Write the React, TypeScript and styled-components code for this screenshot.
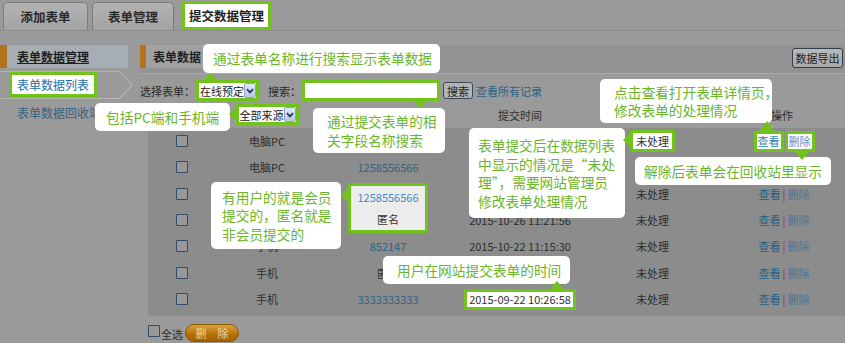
import React from 'react';
import styled, { createGlobalStyle, css } from 'styled-components';

const GREEN = '#72c21c';
const TIP_TEXT = '#6ab52c';
const ORANGE = '#b7731c';
const FONT = `"Noto Sans CJK SC", "Noto Sans", sans-serif`;
const COLS = '68px 102px 140px 124px 141px 1fr';

const GlobalStyle = createGlobalStyle`
  html, body { margin: 0; padding: 0; background: #9a9a9a; }
  body { font-family: ${FONT}; overflow: hidden; }
  * { box-sizing: border-box; }
`;

type Arrow = 'up' | 'down' | 'left' | 'right';
interface HlProps {
  $hl?: boolean;
  $arrow?: Arrow;
  $at?: number;
  $len?: number;
}

const arrowCss = (dir: Arrow, at: number, len: number) => {
  const s = 7;
  const base = css`
    content: '';
    position: absolute;
    width: 0;
    height: 0;
    border-style: solid;
    z-index: 4;
  `;
  switch (dir) {
    case 'up':
      return css`&::after { ${base}; left: ${at - s - 3}px; bottom: calc(100% + 3px);
        border-width: 0 ${s}px ${len}px ${s}px; border-color: transparent transparent ${GREEN} transparent; }`;
    case 'down':
      return css`&::after { ${base}; left: ${at - s - 3}px; top: calc(100% + 3px);
        border-width: ${len}px ${s}px 0 ${s}px; border-color: ${GREEN} transparent transparent transparent; }`;
    case 'left':
      return css`&::after { ${base}; top: ${at - s - 3}px; right: calc(100% + 3px);
        border-width: ${s}px ${len}px ${s}px 0; border-color: transparent ${GREEN} transparent transparent; }`;
    default:
      return css`&::after { ${base}; top: ${at - s - 3}px; left: calc(100% + 3px);
        border-width: ${s}px 0 ${s}px ${len}px; border-color: transparent transparent transparent ${GREEN}; }`;
  }
};

const highlight = css<HlProps>`
  ${(p) =>
    p.$hl &&
    css`
      border: 3px solid ${GREEN};
      background: #fff;
      position: relative;
      z-index: 3;
    `}
  ${(p) => p.$arrow && arrowCss(p.$arrow, p.$at ?? 0, p.$len ?? 7)}
`;

const Page = styled.div`
  position: relative;
  width: 845px;
  height: 343px;
  overflow: hidden;
  background: #9a9a9a;
  color: #2e2e2e;
  font-size: 11px;
`;

/* ---------- tabs ---------- */
const TabBar = styled.div`
  display: flex;
  align-items: flex-end;
  height: 31px;
  padding-left: 3px;
  border-bottom: 1px solid #8e8e8e;
`;

const Tab = styled.div<{ $active?: boolean; $w: number }>`
  width: ${(p) => p.$w}px;
  height: 28px;
  margin-right: 4px;
  border: 1px solid #7c7c7c;
  border-bottom: none;
  border-radius: 5px 5px 0 0;
  background: linear-gradient(#b3b3b3, #a3a3a3);
  display: flex;
  align-items: center;
  justify-content: center;
  font-size: 12.5px;
  font-weight: bold;
  color: #2a2a2a;
  ${(p) =>
    p.$active &&
    css`
      height: 29px;
      margin-left: 4px;
      border: 3px solid ${GREEN};
      border-radius: 0;
      background: #fff;
      color: #222;
    `}
`;

/* ---------- body ---------- */
const Body = styled.div`
  display: flex;
  gap: 6px;
  margin-top: 14px;
`;

const Sidebar = styled.div`
  width: 134px;
  flex-shrink: 0;
`;

const SideHeader = styled.div`
  width: 128px;
  height: 23px;
  border-left: 7px solid ${ORANGE};
  background: #a7aeb3;
  padding-left: 10px;
  line-height: 23px;
  font-size: 12px;
  font-weight: bold;
  text-decoration: underline;
  color: #1f1f1f;
`;

const SideItem = styled.div`
  position: relative;
  height: 28px;
  margin-top: 3px;
  padding-top: 1px;
  &::before {
    content: '';
    position: absolute;
    left: 0;
    right: 15px;
    top: 0;
    bottom: 0;
    border-top: 1px solid #b4b4b4;
    border-bottom: 1px solid #b4b4b4;
  }
  &::after {
    content: '';
    position: absolute;
    right: 5px;
    top: 4px;
    width: 19px;
    height: 19px;
    border-top: 1px solid #b4b4b4;
    border-right: 1px solid #b4b4b4;
    transform: rotate(45deg);
  }
`;

const ItemLabel = styled.span<HlProps>`
  display: inline-block;
  margin-left: 9px;
  height: 25px;
  line-height: 19px;
  padding: 0 5px;
  font-size: 12px;
  color: #1d6ea6;
  ${highlight}
`;

const SideLink = styled.div`
  margin-top: 6px;
  padding-left: 17px;
  font-size: 12px;
  line-height: 16px;
  color: #38617f;
  white-space: nowrap;
`;

const Main = styled.div`
  flex: 1;
  min-width: 0;
`;

const MainHeader = styled.div`
  display: flex;
  align-items: flex-start;
  height: 29px;
  background: #929292;
  border-bottom: 1px solid #ababab;
`;

const HeaderTitle = styled.div`
  height: 23px;
  border-left: 6px solid ${ORANGE};
  padding: 0 30px 0 7px;
  background: #a1a1a1;
  line-height: 23px;
  font-size: 12px;
  font-weight: bold;
  color: #1f1f1f;
`;

const ExportButton = styled.button`
  margin: 3px 2px 0 auto;
  width: 51px;
  height: 20px;
  padding: 0;
  border: 1px solid #2c3e50;
  border-radius: 3px;
  background: linear-gradient(#b9b9b9, #a9a9a9);
  font-family: ${FONT};
  font-size: 11px;
  color: #222;
`;

const FilterRow = styled.div`
  display: flex;
  align-items: center;
  height: 27px;
  padding-top: 6px;
`;

const Label = styled.span<{ $ml?: number }>`
  margin-left: ${(p) => p.$ml ?? 0}px;
  font-size: 11px;
  color: #2a2a2a;
  white-space: nowrap;
`;

const SelectBox = styled.div<HlProps & { $ml?: number }>`
  display: flex;
  align-items: center;
  justify-content: space-between;
  width: 63px;
  height: 21px;
  margin-left: ${(p) => p.$ml ?? 0}px;
  padding-left: 1px;
  font-size: 11px;
  color: #222;
  white-space: nowrap;
  ${highlight}
`;

const SelectArrow = styled.span`
  display: flex;
  align-items: center;
  justify-content: center;
  width: 12px;
  height: 15px;
  border: 1px solid #8fa2cc;
  border-radius: 2px;
  background: linear-gradient(#e2e9f6, #b9c8e6);
`;

const SearchInput = styled.div<HlProps>`
  width: 138px;
  height: 21px;
  margin-left: 1px;
  ${highlight}
`;

const SearchButton = styled.button`
  margin-left: 3px;
  width: 30px;
  height: 17px;
  padding: 0;
  border: 1px solid #3a4a5a;
  border-radius: 3px;
  background: #b4b4b4;
  font-family: ${FONT};
  font-size: 11px;
  color: #222;
  line-height: 14px;
`;

const LinkText = styled.span`
  margin-left: 3px;
  font-size: 11px;
  color: #2a6286;
`;

/* ---------- table ---------- */
const Table = styled.div`
  margin-left: 8px;
`;

const HeadRow = styled.div`
  display: grid;
  grid-template-columns: ${COLS};
  height: 27px;
  align-items: center;
  justify-items: center;
  font-size: 11px;
  color: #2e2e2e;
`;

const HeadCell = styled.span<{ $dx?: number }>`
  margin-left: ${(p) => p.$dx ?? 0}px;
`;

const TBody = styled.div`
  display: grid;
  grid-template-columns: ${COLS};
  grid-auto-rows: 26.33px;
  align-items: center;
  justify-items: center;
  padding-bottom: 4px;
  background: #8c8c8c;
  font-size: 11px;
`;

const Check = styled.span`
  display: inline-block;
  width: 12px;
  height: 12px;
  border: 1.5px solid #2f4d6b;
  border-radius: 1px;
  background: #989898;
`;

const Cell = styled.span<HlProps & { $tone?: 'text' | 'link' }>`
  white-space: nowrap;
  color: ${(p) => (p.$tone === 'link' ? (p.$hl ? '#3f8ccc' : '#2d6486') : p.$hl ? '#333' : '#2e2e2e')};
  ${(p) =>
    p.$hl &&
    css`
      height: 21px;
      display: flex;
      align-items: center;
      padding: 0 2px;
    `}
  ${highlight}
`;

const UserStack = styled.div<HlProps>`
  grid-row: span 2;
  align-self: stretch;
  width: 80px;
  margin-top: 2px;
  display: flex;
  flex-direction: column;
  ${highlight}
  background: #ececec;
`;

const StackLine = styled.span<{ $tone?: 'link' }>`
  flex: 1;
  display: flex;
  align-items: center;
  justify-content: center;
  color: ${(p) => (p.$tone === 'link' ? '#3f8ccc' : '#333')};
`;

const Status = styled.span<HlProps>`
  white-space: nowrap;
  color: #2e2e2e;
  ${(p) =>
    p.$hl &&
    css`
      width: 45px;
      height: 22px;
      display: flex;
      align-items: center;
      justify-content: center;
      color: #333;
    `}
  ${highlight}
`;

const Ops = styled.span<{ $tight?: boolean }>`
  display: flex;
  align-items: center;
  gap: ${(p) => (p.$tight ? 1 : 2)}px;
  white-space: nowrap;
`;

const OpLink = styled.span<HlProps & { $kind: 'view' | 'del' }>`
  color: ${(p) => (p.$kind === 'view' ? (p.$hl ? '#2f7fb5' : '#245f85') : p.$hl ? '#5b8fc8' : '#4f729a')};
  ${(p) =>
    p.$hl &&
    css`
      height: 21px;
      padding: 0 1px;
      display: flex;
      align-items: center;
    `}
  ${highlight}
`;

const Sep = styled.span`
  color: #8b3b3b;
`;

const Footer = styled.div`
  display: flex;
  align-items: flex-start;
  margin-top: 8px;
  height: 19px;
`;

const FootCheck = styled(Check)`
  margin-top: 1px;
`;

const FootLabel = styled.span`
  margin: 3px 0 0 1px;
  font-size: 11px;
  line-height: 14px;
  color: #2e2e2e;
`;

const DeleteButton = styled.button`
  margin-left: 2px;
  width: 54px;
  height: 18px;
  padding: 0;
  border: 1px solid #8a5a00;
  border-radius: 9px;
  background: linear-gradient(#dba23a, #b36f06 60%, #a56300);
  font-family: ${FONT};
  font-size: 11px;
  line-height: 14px;
  color: #efd59c;
`;

/* ---------- annotations ---------- */
const Tip = styled.div<{ $x: number; $y: number; $w: number; $h: number; $pl: number }>`
  position: absolute;
  left: ${(p) => p.$x}px;
  top: ${(p) => p.$y}px;
  width: ${(p) => p.$w}px;
  height: ${(p) => p.$h}px;
  padding-left: ${(p) => p.$pl}px;
  display: flex;
  flex-direction: column;
  justify-content: center;
  background: #fff;
  border-radius: 5px;
  color: ${TIP_TEXT};
  font-size: 13.7px;
  line-height: 18.5px;
  white-space: nowrap;
  z-index: 2;
`;

const Chevron = () => (
  <svg width="8" height="6" viewBox="0 0 8 6">
    <path d="M1 1.2 L4 4.4 L7 1.2" fill="none" stroke="#26365a" strokeWidth="1.7" />
  </svg>
);

/* Cells covered entirely by the call-outs are left empty (null). */
type Row = {
  src: string | null;
  user?: string | null;
  userTone?: 'link' | 'text';
  time: string | null;
  timeHl?: boolean;
  status: boolean;
  statusHl?: boolean;
  ops: boolean;
  opsHl?: boolean;
  stack?: boolean;
  skipUser?: boolean;
};

const rows: Row[] = [
  { src: '电脑PC', user: null, time: null, status: true, statusHl: true, ops: true, opsHl: true },
  { src: '电脑PC', user: '1258556566', userTone: 'link', time: null, status: false, ops: false },
  { src: null, stack: true, time: null, status: true, ops: true },
  { src: null, skipUser: true, time: '2015-10-26 11:21:56', status: true, ops: true },
  { src: '手机', user: '852147', userTone: 'link', time: '2015-10-22 11:15:30', status: true, ops: true },
  { src: '手机', user: '匿名', userTone: 'text', time: null, status: true, ops: true },
  { src: '手机', user: '3333333333', userTone: 'link', time: '2015-09-22 10:26:58', timeHl: true, status: true, ops: true },
];

export default function App() {
  return (
    <Page>
      <GlobalStyle />
      <TabBar>
        <Tab $w={85}>添加表单</Tab>
        <Tab $w={82}>表单管理</Tab>
        <Tab $w={89} $active>
          提交数据管理
        </Tab>
      </TabBar>

      <Body>
        <Sidebar>
          <SideHeader>表单数据管理</SideHeader>
          <SideItem>
            <ItemLabel $hl>表单数据列表</ItemLabel>
          </SideItem>
          <SideLink>表单数据回收站</SideLink>
        </Sidebar>

        <Main>
          <MainHeader>
            <HeaderTitle>表单数据</HeaderTitle>
            <ExportButton>数据导出</ExportButton>
          </MainHeader>

          <FilterRow>
            <Label>选择表单：</Label>
            <SelectBox $hl $arrow="up" $at={14} $ml={1}>
              <span>在线预定</span>
              <SelectArrow>
                <Chevron />
              </SelectArrow>
            </SelectBox>
            <Label $ml={9}>搜索：</Label>
            <SearchInput $hl $arrow="down" $at={118} />
            <SearchButton>搜索</SearchButton>
            <LinkText>查看所有记录</LinkText>
          </FilterRow>

          <Table>
            <HeadRow>
              <span />
              <SelectBox $hl $arrow="left" $at={10}>
                <span>全部来源</span>
                <SelectArrow>
                  <Chevron />
                </SelectArrow>
              </SelectBox>
              <span />
              <HeadCell>提交时间</HeadCell>
              <span />
              <HeadCell $dx={-4}>操作</HeadCell>
            </HeadRow>

            <TBody>
              {rows.map((r, i) => (
                <React.Fragment key={i}>
                  <Check />
                  <Cell>{r.src}</Cell>
                  {r.stack ? (
                    <UserStack $hl $arrow="left" $at={12}>
                      <StackLine $tone="link">1258556566</StackLine>
                      <StackLine>匿名</StackLine>
                    </UserStack>
                  ) : r.skipUser ? null : (
                    <Cell $tone={r.userTone === 'link' ? 'link' : 'text'}>{r.user}</Cell>
                  )}
                  {r.timeHl ? (
                    <Cell $hl $arrow="up" $at={93} $len={8}>
                      {r.time}
                    </Cell>
                  ) : (
                    <Cell>{r.time}</Cell>
                  )}
                  {r.statusHl ? (
                    <Status $hl $arrow="left" $at={10}>
                      未处理
                    </Status>
                  ) : (
                    <Status>{r.status ? '未处理' : null}</Status>
                  )}
                  {r.opsHl ? (
                    <Ops $tight>
                      <OpLink $kind="view" $hl $arrow="up" $at={13} $len={10}>
                        查看
                      </OpLink>
                      <OpLink $kind="del" $hl $arrow="down" $at={17} $len={8}>
                        删除
                      </OpLink>
                    </Ops>
                  ) : r.ops ? (
                    <Ops>
                      <OpLink $kind="view">查看</OpLink>
                      <Sep>|</Sep>
                      <OpLink $kind="del">删除</OpLink>
                    </Ops>
                  ) : (
                    <span />
                  )}
                </React.Fragment>
              ))}
            </TBody>

            <Footer>
              <FootCheck />
              <FootLabel>全选</FootLabel>
              <DeleteButton>删　除</DeleteButton>
            </Footer>
          </Table>
        </Main>
      </Body>

      <Tip $x={203} $y={44} $w={237} $h={29} $pl={10}>
        通过表单名称进行搜索显示表单数据
      </Tip>
      <Tip $x={95} $y={103} $w={135} $h={28} $pl={11}>
        包括PC端和手机端
      </Tip>
      <Tip $x={313} $y={108} $w={132} $h={45} $pl={14}>
        <span>通过提交表单的相</span>
        <span>关字段名称搜索</span>
      </Tip>
      <Tip $x={600} $y={79} $w={172} $h={44} $pl={14}>
        <span>点击查看打开表单详情页，</span>
        <span>修改表单的处理情况</span>
      </Tip>
      <Tip $x={469} $y={128} $w={156} $h={90} $pl={9}>
        <span>表单提交后在数据列表</span>
        <span>中显示的情况是“未处</span>
        <span>理”，需要网站管理员</span>
        <span>修改表单处理情况</span>
      </Tip>
      <Tip $x={635} $y={157} $w={196} $h={28} $pl={9}>
        解除后表单会在回收站里显示
      </Tip>
      <Tip $x={211} $y={182} $w={130} $h={67} $pl={11}>
        <span>有用户的就是会员</span>
        <span>提交的，匿名就是</span>
        <span>非会员提交的</span>
      </Tip>
      <Tip $x={383} $y={256} $w={187} $h={28} $pl={14}>
        用户在网站提交表单的时间
      </Tip>
    </Page>
  );
}
